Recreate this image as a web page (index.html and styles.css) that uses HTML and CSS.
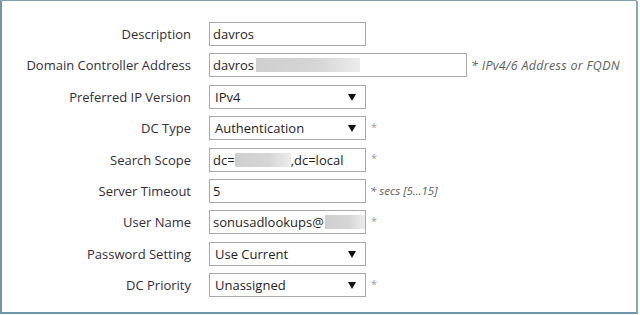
FILE: index.html
```html
<!DOCTYPE html>
<html>
<head>
<meta charset="utf-8">
<link rel="stylesheet" href="styles.css">
</head>
<body>
<div class="frame">
  <div class="form">
    <div class="label">Description</div>
    <div class="ctl"><div class="field w156">davros</div></div>

    <div class="label">Domain Controller Address</div>
    <div class="ctl"><div class="field w257">davros<span class="redact r1"></span></div><span class="hint wide">* IPv4/6 Address or FQDN</span></div>

    <div class="label">Preferred IP Version</div>
    <div class="ctl"><div class="field sel w156">IPv4<svg class="arrow" width="8" height="7" viewBox="0 0 8 7"><path d="M0 0H8L4 7Z" fill="#111"/></svg></div></div>

    <div class="label">DC Type</div>
    <div class="ctl"><div class="field sel w156">Authentication<svg class="arrow" width="8" height="7" viewBox="0 0 8 7"><path d="M0 0H8L4 7Z" fill="#111"/></svg></div><span class="star">*</span></div>

    <div class="label">Search Scope</div>
    <div class="ctl"><div class="field w156 tight">dc=<span class="redact r2"></span>,dc=local</div><span class="star">*</span></div>

    <div class="label">Server Timeout</div>
    <div class="ctl"><div class="field w156">5</div><span class="hint">* secs [5...15]</span></div>

    <div class="label">User Name</div>
    <div class="ctl"><div class="field w156 tight">sonusadlookups@<span class="redact r3"></span></div><span class="star">*</span></div>

    <div class="label">Password Setting</div>
    <div class="ctl"><div class="field sel w156">Use Current<svg class="arrow" width="8" height="7" viewBox="0 0 8 7"><path d="M0 0H8L4 7Z" fill="#111"/></svg></div></div>

    <div class="label">DC Priority</div>
    <div class="ctl"><div class="field sel w156">Unassigned<svg class="arrow" width="8" height="7" viewBox="0 0 8 7"><path d="M0 0H8L4 7Z" fill="#111"/></svg></div><span class="star">*</span></div>
  </div>
</div>
</body>
</html>
```
FILE: styles.css
```css
html, body {
  margin: 0;
  padding: 0;
  background: #ffffff;
}
body {
  width: 640px;
  height: 315px;
  overflow: hidden;
  font-family: "Open Sans", "DejaVu Sans", sans-serif;
}
.frame {
  box-sizing: border-box;
  width: 638px;
  height: 314px;
  border-top: 1px solid #7f9fae;
  border-left: 2px solid #6f95a6;
  border-right: 2px solid #8aa8b6;
  border-bottom: 2px solid #6f95a6;
  border-top-right-radius: 3px;
  background: #fff;
}
.form {
  display: grid;
  grid-template-columns: 189px auto;
  column-gap: 18px;
  row-gap: 7.4px;
  padding-top: 21px;
  grid-auto-rows: 24px;
}
.label {
  text-align: right;
  font-size: 13px;
  color: #342d3a;
  line-height: 24px;
  white-space: nowrap;
}
.ctl {
  display: flex;
  align-items: center;
}
.field {
  box-sizing: border-box;
  height: 24px;
  border: 1px solid #a9a9a9;
  background: #fff;
  font-size: 13px;
  color: #1e1e1e;
  padding-left: 3px;
  display: flex;
  align-items: center;
  position: relative;
  white-space: nowrap;
}
.sel {
  padding-left: 5px;
}
.w156 { width: 157px; }
.w257 { width: 258px; }
.arrow {
  position: absolute;
  right: 9px;
  top: 8px;
}
.redact {
  display: inline-block;
  height: 14px;
  background: linear-gradient(to right, #cfcfcf, #d6d6d6 60%, #ececec);
}
.r1 { width: 104px; margin-left: 2px; }
.r2 { width: 56px; }
.r3 { width: 41px; margin-left: 1px; }
.star {
  font-size: 11px;
  color: #9a9a9a;
  margin-left: 5px;
  margin-top: -4px;
}
.hint {
  font-size: 11.5px;
  font-style: italic;
  color: #5e5e5e;
  margin-left: 4px;
  white-space: nowrap;
}
.hint.wide {
  font-size: 12.5px;
  letter-spacing: 0.3px;
}
```
